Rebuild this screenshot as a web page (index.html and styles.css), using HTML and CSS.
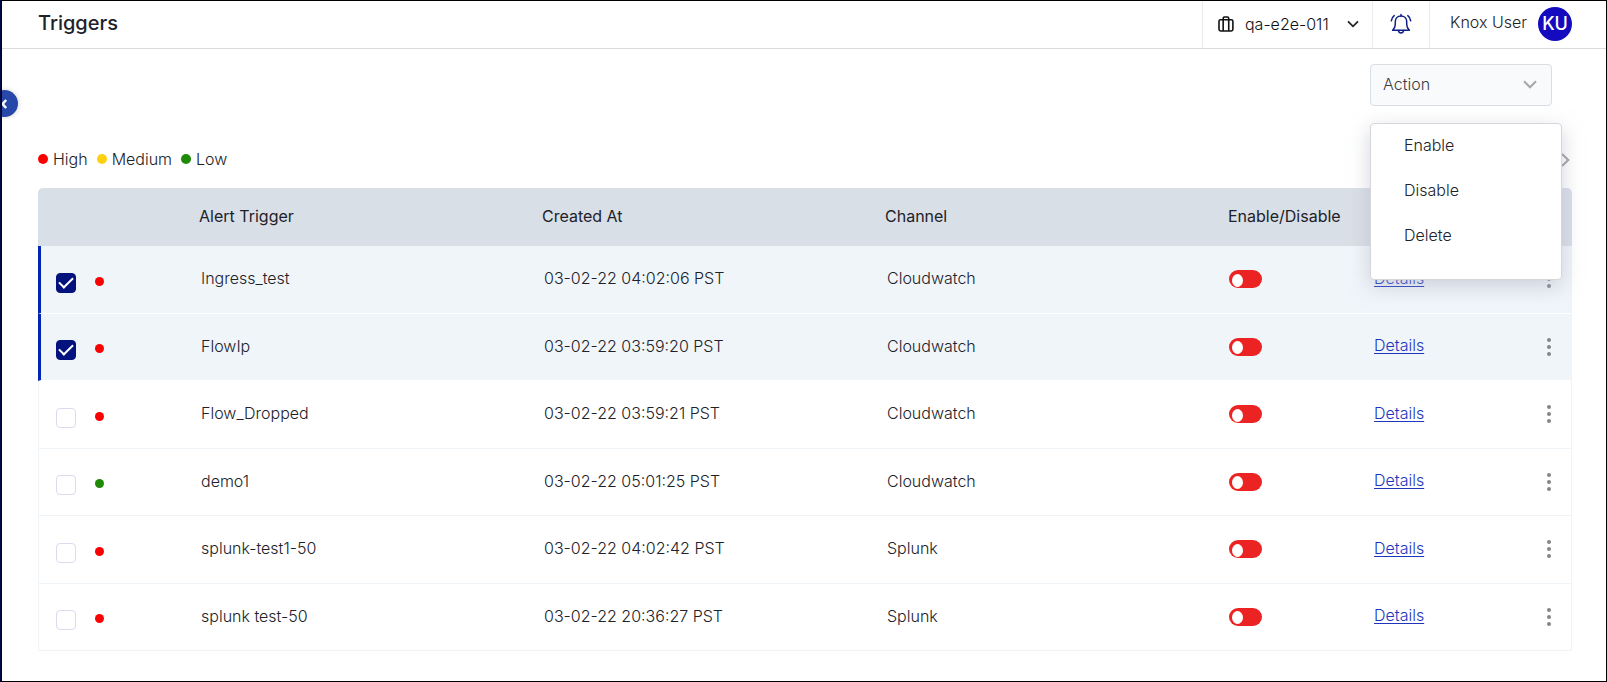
FILE: index.html
```html
<!DOCTYPE html>
<html lang="en">
<head>
<meta charset="utf-8">
<title>Triggers</title>
<link rel="stylesheet" href="styles.css">
</head>
<body>
<div class="app">
  <button class="collapse" type="button" aria-label="Collapse sidebar">
    <svg width="7" height="10" viewBox="0 0 7 10"><path d="M5.2 1 L1.6 5 L5.2 9" fill="none" stroke="#fff" stroke-width="2.4"/></svg>
  </button>

  <header class="topbar">
    <h1 class="title">Triggers</h1>
    <div class="project">
      <svg class="project-icon" width="16" height="16" viewBox="0 0 16 16" fill="none" stroke="#111" stroke-width="1.6"><rect x="1" y="3.7" width="14" height="11.3" rx="1.6"/><path d="M5.2 15V2.4Q5.2 1 6.5 1H9.5Q10.8 1 10.8 2.4V15"/></svg>
      <select class="project-select" aria-label="Project"><option>qa-e2e-011</option></select>
      <svg class="project-arrow" width="12" height="8" viewBox="0 0 12 8"><path d="M1 1.3 L6 6.3 L11 1.3" fill="none" stroke="#222" stroke-width="1.8"/></svg>
    </div>
    <button class="bell" type="button" aria-label="Notifications">
      <svg width="22" height="22" viewBox="0 0 22 22" fill="none" stroke="#0f1f86" stroke-width="1.5" stroke-linejoin="round" stroke-linecap="round"><path d="M2.6 17.2H19.4C17.4 15.4 16.7 14 16.7 11.2V8.6C16.7 5.3 14.3 2.9 11 2.9S5.3 5.3 5.3 8.6V11.2C5.3 14 4.6 15.4 2.6 17.2Z"/><path d="M11 2.9V1.6M8.4 17.6C8.7 19 9.7 19.9 11 19.9S13.3 19 13.6 17.6"/><path d="M4.2 2.6C2.6 3.8 1.6 5.6 1.3 7.8M17.8 2.6C19.4 3.8 20.4 5.6 20.7 7.8"/></svg>
    </button>
    <div class="user">
      <span class="user-name">Knox User</span>
      <span class="avatar">KU</span>
    </div>
  </header>

  <main class="content">
    <div class="toolbar">
      <div class="action">
        <button class="action-button" type="button" aria-haspopup="menu" aria-expanded="true">
          Action
          <svg width="14" height="9" viewBox="0 0 14 9"><path d="M1 1.3 L7 7.3 L13 1.3" fill="none" stroke="#a6a8ab" stroke-width="2"/></svg>
        </button>
        <div class="menu" role="menu">
          <button class="menu-item" type="button" role="menuitem">Enable</button>
          <button class="menu-item" type="button" role="menuitem">Disable</button>
          <button class="menu-item" type="button" role="menuitem">Delete</button>
        </div>
      </div>
    </div>

    <div class="legend-row">
      <ul class="legend">
        <li><span class="dot dot-large high"></span>High</li>
        <li><span class="dot dot-large medium"></span>Medium</li>
        <li><span class="dot dot-large low"></span>Low</li>
      </ul>
      <button class="next" type="button" aria-label="Next page">
        <svg width="9" height="14" viewBox="0 0 9 14"><path d="M1 1 L7.3 7 L1 13" fill="none" stroke="#9c9ea1" stroke-width="2"/></svg>
      </button>
    </div>

    <table class="triggers">
      <colgroup><col class="col-check"><col><col><col><col class="col-toggle"><col class="col-details"><col class="col-more"></colgroup>
      <thead>
        <tr><th></th><th>Alert Trigger</th><th>Created At</th><th>Channel</th><th>Enable/Disable</th><th></th><th></th></tr>
      </thead>
      <tbody>
        <tr class="selected">
          <td><div class="pick"><input type="checkbox" aria-label="Select Ingress_test" checked><span class="dot high"></span></div></td>
          <td>Ingress_test</td><td>03-02-22 04:02:06 PST</td><td>Cloudwatch</td>
          <td><input class="switch" type="checkbox" role="switch" aria-label="Enable Ingress_test"></td>
          <td><a href="#">Details</a></td>
          <td><button class="more" type="button" aria-label="More"><i></i><i></i><i></i></button></td>
        </tr>
        <tr class="selected">
          <td><div class="pick"><input type="checkbox" aria-label="Select FlowIp" checked><span class="dot high"></span></div></td>
          <td>FlowIp</td><td>03-02-22 03:59:20 PST</td><td>Cloudwatch</td>
          <td><input class="switch" type="checkbox" role="switch" aria-label="Enable FlowIp"></td>
          <td><a href="#">Details</a></td>
          <td><button class="more" type="button" aria-label="More"><i></i><i></i><i></i></button></td>
        </tr>
        <tr>
          <td><div class="pick"><input type="checkbox" aria-label="Select Flow_Dropped"><span class="dot high"></span></div></td>
          <td>Flow_Dropped</td><td>03-02-22 03:59:21 PST</td><td>Cloudwatch</td>
          <td><input class="switch" type="checkbox" role="switch" aria-label="Enable Flow_Dropped"></td>
          <td><a href="#">Details</a></td>
          <td><button class="more" type="button" aria-label="More"><i></i><i></i><i></i></button></td>
        </tr>
        <tr>
          <td><div class="pick"><input type="checkbox" aria-label="Select demo1"><span class="dot low"></span></div></td>
          <td>demo1</td><td>03-02-22 05:01:25 PST</td><td>Cloudwatch</td>
          <td><input class="switch" type="checkbox" role="switch" aria-label="Enable demo1"></td>
          <td><a href="#">Details</a></td>
          <td><button class="more" type="button" aria-label="More"><i></i><i></i><i></i></button></td>
        </tr>
        <tr>
          <td><div class="pick"><input type="checkbox" aria-label="Select splunk-test1-50"><span class="dot high"></span></div></td>
          <td>splunk-test1-50</td><td>03-02-22 04:02:42 PST</td><td>Splunk</td>
          <td><input class="switch" type="checkbox" role="switch" aria-label="Enable splunk-test1-50"></td>
          <td><a href="#">Details</a></td>
          <td><button class="more" type="button" aria-label="More"><i></i><i></i><i></i></button></td>
        </tr>
        <tr>
          <td><div class="pick"><input type="checkbox" aria-label="Select splunk test-50"><span class="dot high"></span></div></td>
          <td>splunk test-50</td><td>03-02-22 20:36:27 PST</td><td>Splunk</td>
          <td><input class="switch" type="checkbox" role="switch" aria-label="Enable splunk test-50"></td>
          <td><a href="#">Details</a></td>
          <td><button class="more" type="button" aria-label="More"><i></i><i></i><i></i></button></td>
        </tr>
      </tbody>
    </table>
  </main>
</div>
</body>
</html>
```

FILE: styles.css
```css
* {
  box-sizing: border-box;
}

body {
  margin: 0;
  padding-left: 1px;
  background: #000a40;
  color: #212229;
  font: 300 16px/24px Inter, sans-serif;
}

button,
select,
input {
  margin: 0;
  padding: 0;
  border: 0;
  background: none;
  color: inherit;
  font: inherit;
}

svg {
  display: block;
}

.app {
  position: relative;
  min-height: 100vh;
  overflow: hidden;
  border: 1px solid #000;
  background: #fff;
}

.collapse {
  position: absolute;
  top: 89px;
  left: -11px;
  display: flex;
  align-items: center;
  justify-content: flex-end;
  width: 27px;
  height: 27px;
  padding-right: 10px;
  border-radius: 50%;
  background: #2748a8;
  box-shadow: 0 0 5px rgba(0, 0, 0, 0.2);
}

/* Top bar */
.topbar {
  display: flex;
  height: 48px;
  padding-right: 34px;
  border-bottom: 1px solid #dcdcdc;
}

.title {
  margin: 0;
  padding: 10px 0 0 36px;
  font-size: 20px;
  font-weight: 500;
  line-height: 24px;
  flex: 1;
}

.project,
.bell,
.user {
  display: flex;
  align-items: center;
  padding-bottom: 2px;
  border-left: 1px solid #ececec;
}

.project {
  position: relative;
  width: 170px;
  padding-left: 15px;
  gap: 11px;
}

.project-select {
  width: 128px;
  appearance: none;
  color: #111;
}

.project-arrow {
  position: absolute;
  right: 13px;
  pointer-events: none;
}

.bell {
  width: 57px;
  justify-content: center;
}

.user {
  padding-left: 20px;
  gap: 11px;
}

.user-name {
  padding-bottom: 3px;
}

.avatar {
  width: 34px;
  height: 34px;
  border-radius: 50%;
  background: #140bbf;
  color: #fff;
  font-size: 18px;
  font-weight: 500;
  line-height: 34px;
  text-align: center;
}

/* Content */
.content {
  padding: 15px 34px 30px 36px;
}

.toolbar {
  display: flex;
  justify-content: flex-end;
  padding-right: 20px;
}

.action {
  position: relative;
}

.action-button {
  display: flex;
  align-items: center;
  justify-content: space-between;
  width: 182px;
  height: 42px;
  padding: 0 14px 2px 12px;
  border: 1px solid #dadde1;
  border-radius: 4px;
  background: #f9fafc;
  color: #3b3c42;
}

.menu {
  position: absolute;
  z-index: 1;
  top: 59px;
  left: 0;
  width: 192px;
  padding-bottom: 22px;
  border: 1px solid #d6d7da;
  border-radius: 4px;
  background: #fff;
  box-shadow: 0 6px 20px rgba(170, 172, 190, 0.5);
}

.menu-item {
  display: block;
  width: 100%;
  height: 45px;
  padding: 0 0 4px 33px;
  text-align: left;
}

.menu-item:last-child {
  height: 43px;
  padding-bottom: 2px;
}

.legend-row {
  display: flex;
  align-items: center;
  justify-content: space-between;
  padding: 41px 2px 17px 0;
}

.legend {
  display: flex;
  gap: 9px;
  margin: 0;
  padding: 0;
  list-style: none;
}

.legend li {
  display: flex;
  align-items: center;
  gap: 5px;
}

.next {
  padding-top: 2px;
}

.dot {
  width: 9px;
  height: 9px;
  border-radius: 50%;
}

.dot-large {
  width: 10px;
  height: 10px;
}

.high {
  background: #fb0000;
}

.medium {
  background: #ffd012;
}

.low {
  background: #1f8a05;
}

/* Table */
.triggers {
  width: 100%;
  table-layout: fixed;
  border-collapse: separate;
  border-spacing: 0;
}

.col-check {
  width: 153px;
}

.col-toggle {
  width: 145px;
}

.col-details {
  width: 132px;
}

.col-more {
  width: 75px;
}

.triggers th {
  height: 58px;
  padding: 0 8px 2px;
  background: #d9dfe7;
  font-weight: 400;
  text-align: left;
}

.triggers th:first-child {
  border-top-left-radius: 5px;
}

.triggers th:last-child {
  border-top-right-radius: 5px;
}

.triggers td {
  height: 67px;
  padding: 0 10px 3px;
  border-bottom: 1px solid #eff4f9;
}

.triggers tbody tr:nth-child(odd) td {
  height: 68px;
}

.triggers td:first-child {
  padding: 6px 0 0 17px;
  border-left: 1px solid #eff4f9;
}

.triggers td:nth-child(5) {
  padding: 0 0 1px 9px;
}

.triggers td:nth-child(6) {
  padding: 0 0 4px 9px;
}

.triggers td:last-child {
  padding: 0 20px 1px 0;
  border-right: 1px solid #eff4f9;
}

.triggers .selected td {
  border-bottom-color: #fff;
  background: #f0f5fa;
}

.triggers .selected td:first-child {
  padding-left: 15px;
  border-left: 3px solid #0026b3;
}

.pick {
  display: flex;
  align-items: center;
  gap: 19px;
}

.pick input {
  width: 20px;
  height: 20px;
  appearance: none;
  border: 1px solid #d9dcee;
  border-radius: 4px;
  background: #fff;
}

.pick input:checked {
  display: grid;
  place-items: center;
  border-color: #03127d;
  background: #03127d;
}

.pick input:checked::after {
  content: "";
  width: 12px;
  height: 6px;
  margin-bottom: 4px;
  border: solid #fff;
  border-width: 0 0 2px 2px;
  transform: rotate(-45deg);
}

.pick .dot {
  margin-bottom: 3px;
}

.switch {
  display: flex;
  align-items: center;
  width: 33px;
  height: 18px;
  padding: 2px 0 0 3px;
  appearance: none;
  border-radius: 9px;
  background: #ec2323;
}

.switch::before {
  content: "";
  width: 11px;
  height: 13px;
  border-radius: 50%;
  background: #fff;
}

.triggers a {
  color: #1d36bd;
  text-underline-offset: 2px;
}

.more {
  display: flex;
  flex-direction: column;
  align-items: flex-end;
  gap: 3px;
  margin-left: auto;
}

.more i {
  width: 4px;
  height: 4px;
  border-radius: 50%;
  background: #858588;
}
```
